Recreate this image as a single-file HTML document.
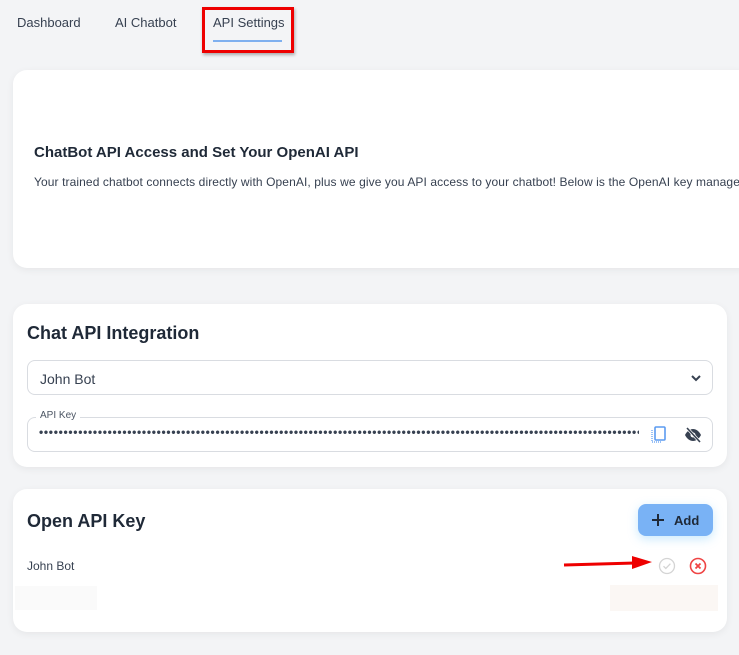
<!DOCTYPE html>
<html><head><meta charset="utf-8"><style>
*{box-sizing:border-box;margin:0;padding:0}
body{width:739px;height:655px;overflow:hidden;background:#f3f4f6;font-family:"Liberation Sans",sans-serif;color:#1f2937;position:relative}
.a{position:absolute}
.card{position:absolute;background:#fff;border-radius:14px;box-shadow:0 2px 8px rgba(0,0,0,0.06)}
.nav{font-size:13px;color:#374151;top:15px}
h2{font-size:18px;font-weight:bold;color:#1f2937}
</style></head><body>
<div class="a nav" style="left:17px">Dashboard</div>
<div class="a nav" style="left:115px">AI Chatbot</div>
<div class="a nav" style="left:213px">API Settings</div>
<div class="a" style="left:213px;top:40px;width:69px;height:2px;background:#7fb0ef"></div>
<div class="a" style="left:202px;top:7px;width:92px;height:46px;border:3px solid #e00;box-shadow:1px 2px 3px rgba(0,0,0,0.3)"></div>

<div class="card" style="left:13px;top:70px;width:740px;height:198px">
 <div class="a" style="left:21px;top:74px;font-size:15px;font-weight:bold;color:#1f2937">ChatBot API Access and Set Your OpenAI API</div>
 <div class="a" style="left:21px;top:105px;font-size:12px;color:#374151;white-space:nowrap;letter-spacing:0.1px">Your trained chatbot connects directly with OpenAI, plus we give you API access to your chatbot! Below is the OpenAI key management</div>
</div>

<div class="card" style="left:13px;top:304px;width:714px;height:163px">
 <h2 class="a" style="left:14px;top:19px">Chat API Integration</h2>
 <div class="a" style="left:14px;top:56px;width:686px;height:35px;border:1px solid #d9dce1;border-radius:8px">
  <div class="a" style="left:12px;top:10px;font-size:14px;color:#374151">John Bot</div>
  <svg class="a" style="right:10px;top:12px" width="12" height="10" viewBox="0 0 12 10"><path d="M2 3l4 4 4-4" stroke="#374151" stroke-width="2" fill="none"/></svg>
 </div>
 <div class="a" style="left:14px;top:113px;width:686px;height:35px;border:1px solid #d9dce1;border-radius:8px">
  <div class="a" style="left:8px;top:-8px;background:#fff;padding:0 4px;font-size:10px;color:#4b5563">API Key</div>
  <div class="a" style="left:11px;top:7px;width:600px;overflow:hidden;white-space:nowrap;font-size:12px;letter-spacing:0.7px;color:#374151;font-weight:bold">••••••••••••••••••••••••••••••••••••••••••••••••••••••••••••••••••••••••••••••••••••••••••••••••••••••••••••••••••••••••••••••••••••••••••••</div>
  <svg class="a" style="left:623px;top:8px" width="16" height="18" viewBox="0 0 16 18"><rect x="4" y="1" width="10" height="13" rx="1" fill="none" stroke="#5b9bf0" stroke-width="1.6"/><path d="M1 4v12h10" fill="none" stroke="#5b9bf0" stroke-width="1.2" stroke-dasharray="1 1"/></svg>
  <svg class="a" style="left:656px;top:9px" width="18" height="16" viewBox="0 0 18 16"><path d="M1 8c2-4 5-6 8-6s6 2 8 6c-2 4-5 6-8 6s-6-2-8-6z" fill="#374151"/><circle cx="9" cy="8" r="2.5" fill="#fff"/><path d="M3 1l13 14" stroke="#fff" stroke-width="3"/><path d="M3 1l13 14" stroke="#374151" stroke-width="1.6"/></svg>
 </div>
</div>

<div class="card" style="left:13px;top:489px;width:714px;height:143px">
 <h2 class="a" style="left:14px;top:22px">Open API Key</h2>
 <div class="a" style="left:625px;top:15px;width:75px;height:32px;background:#79b2f5;border-radius:8px;box-shadow:0 3px 10px rgba(120,200,250,0.4);font-size:13px;font-weight:bold;color:#1f2937">
  <svg class="a" style="left:14px;top:10px" width="12" height="12" viewBox="0 0 12 12"><path d="M6 0v12M0 6h12" stroke="#1f2937" stroke-width="2"/></svg><span class="a" style="left:36px;top:9px">Add</span>
 </div>
 <div class="a" style="left:14px;top:70px;font-size:12px;color:#374151">John Bot</div>
 <svg class="a" style="left:645px;top:68px" width="18" height="18" viewBox="0 0 18 18"><circle cx="9" cy="9" r="7.5" fill="none" stroke="#d4d4d4" stroke-width="1.3"/><path d="M5.5 9.2l2.3 2.3 4.6-4.8" fill="none" stroke="#d4d4d4" stroke-width="1.3"/></svg>
 <svg class="a" style="left:676px;top:68px" width="18" height="18" viewBox="0 0 18 18"><circle cx="9" cy="9" r="7.5" fill="none" stroke="#ef4444" stroke-width="1.6"/><path d="M6.5 6.5l5 5M11.5 6.5l-5 5" stroke="#ef4444" stroke-width="1.8"/></svg>
 <div class="a" style="left:597px;top:96px;width:108px;height:26px;background:#fbf7f4"></div>
 <div class="a" style="left:2px;top:97px;width:82px;height:24px;background:#fafafa"></div>
</div>

<svg class="a" style="left:560px;top:553px" width="100" height="20" viewBox="0 0 100 20"><path d="M4 12L75 10" stroke="#e00" stroke-width="3"/><path d="M72 3L92 9 72 16z" fill="#e00"/></svg>
</body></html>
